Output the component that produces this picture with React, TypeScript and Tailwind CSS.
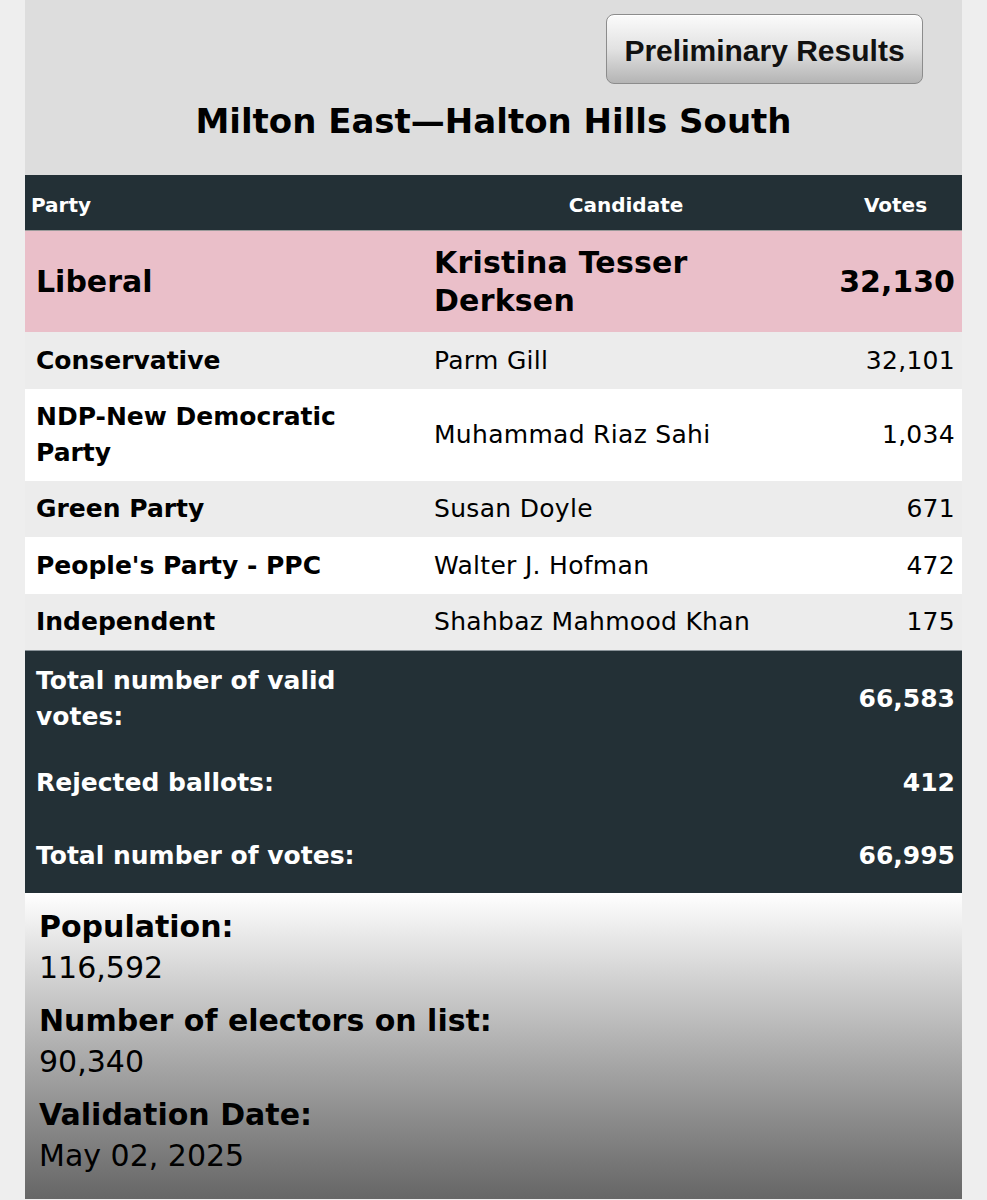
const rows = [
  { party: 'Conservative', candidate: 'Parm Gill', votes: '32,101', bg: 'bg-[#ececec]', h: 'h-[57px]' },
  { party: 'NDP-New Democratic Party', candidate: 'Muhammad Riaz Sahi', votes: '1,034', bg: 'bg-white', h: 'h-[92px]' },
  { party: 'Green Party', candidate: 'Susan Doyle', votes: '671', bg: 'bg-[#ececec]', h: 'h-[56px]' },
  { party: "People's Party - PPC", candidate: 'Walter J. Hofman', votes: '472', bg: 'bg-white', h: 'h-[57px]' },
  { party: 'Independent', candidate: 'Shahbaz Mahmood Khan', votes: '175', bg: 'bg-[#ececec]', h: 'h-[56px]' },
];

const totals = [
  { label: 'Total number of valid votes:', value: '66,583', h: 'h-[96px]' },
  { label: 'Rejected ballots:', value: '412', h: 'h-[72px]' },
  { label: 'Total number of votes:', value: '66,995', h: 'h-[74px]' },
];

const stats = [
  { label: 'Population:', value: '116,592' },
  { label: 'Number of electors on list:', value: '90,340' },
  { label: 'Validation Date:', value: 'May 02, 2025' },
];

export default function App() {
  return (
    <div className="min-h-screen bg-[#eeeeee] px-[25px] text-black" style={{ fontFamily: '"DejaVu Sans", Verdana, sans-serif' }}>
      <div className="bg-[#dddddd]">
        <div className="flex justify-end pt-[14px] pr-[39px]">
          <button className="w-[317px] h-[70px] pt-[3px] rounded-[8px] border border-[#8c8c8c] bg-gradient-to-b from-[#fbfbfb] via-[#e2e2e2] to-[#b4b4b4] text-[30px] font-bold text-[#111] font-['Liberation_Sans',Arial,sans-serif] shadow-[inset_0_1px_0_#fff]">
            Preliminary Results
          </button>
        </div>
        <h1 className="mt-[17px] mb-[34px] text-center text-[34px] font-bold leading-[40px]">
          Milton East—Halton Hills South
        </h1>

        <div className="grid grid-cols-[398px_406px_1fr] h-[55px] pt-[5px] items-center bg-[#233036] text-white text-[20px] font-bold">
          <div className="pl-[6px]">Party</div>
          <div className="text-center">Candidate</div>
          <div className="text-center">Votes</div>
        </div>

        <div className="grid grid-cols-[398px_406px_1fr] items-center bg-[#eabfc9] border-t border-[#9a9a9a] h-[102px] text-[30px] font-bold leading-[38px]">
          <div className="pl-[11px]">Liberal</div>
          <div className="pl-[11px] pr-8 tracking-[0.2px]">Kristina Tesser Derksen</div>
          <div className="text-right pr-[7px]">32,130</div>
        </div>

        {rows.map((r) => (
          <div key={r.party} className={`grid grid-cols-[398px_406px_1fr] items-center text-[25px] leading-[36px] ${r.h} ${r.bg}`}>
            <div className="pl-[11px] pr-12 font-bold">{r.party}</div>
            <div className="pl-[11px] tracking-[0.3px]">{r.candidate}</div>
            <div className="text-right pr-[7px] tracking-[0.3px]">{r.votes}</div>
          </div>
        ))}

        <div className="bg-[#233036] border-t border-[#8a9399] text-white text-[25px] font-bold leading-[36px]">
          {totals.map((t) => (
            <div key={t.label} className={`grid grid-cols-[398px_406px_1fr] items-center ${t.h}`}>
              <div className="pl-[11px] pr-12">{t.label}</div>
              <div />
              <div className="text-right pr-[7px]">{t.value}</div>
            </div>
          ))}
        </div>

        <div className="h-[306px] bg-gradient-to-b from-white to-[#666666] pl-[14px] pt-[13px] text-[30px] leading-[41px]">
          {stats.map((s) => (
            <div key={s.label} className="mt-[12px] first:mt-0">
              <div className="font-bold">{s.label}</div>
              <div>{s.value}</div>
            </div>
          ))}
        </div>
      </div>
    </div>
  );
}
